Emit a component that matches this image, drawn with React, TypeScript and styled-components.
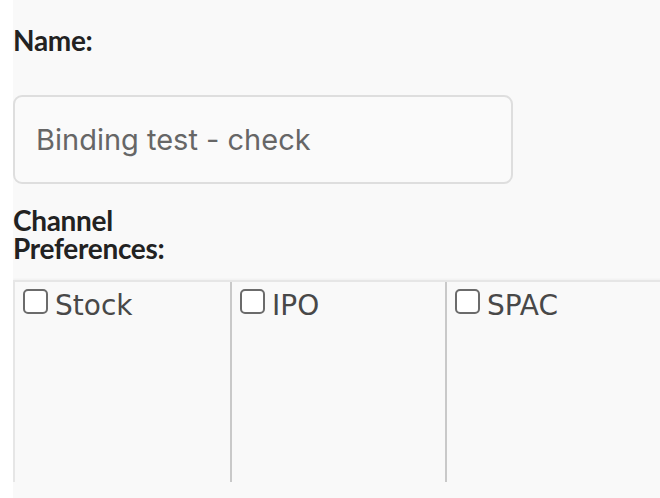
import React from "react"
import styled, { createGlobalStyle } from "styled-components"

const GlobalStyle = createGlobalStyle`
  html, body {
    margin: 0;
    padding: 0;
    background: #ffffff;
  }
  body {
    font-family: "Lato", "Liberation Sans", sans-serif;
    overflow: hidden;
  }
`

const channels = ["Stock", "IPO", "SPAC"]

const App: React.FC = () => {
  return (
    <>
      <GlobalStyle />
      <Page>
        <Label>Name:</Label>
        <NameInput defaultValue="Binding test - check" />
        <Label $tight>
          Channel
          <br />
          Preferences:
        </Label>
        <ChannelTable>
          {channels.map((c, i) => (
            <Column key={c} $first={i === 0}>
              <CheckRow>
                <Box type="checkbox" />
                <CheckText>{c}</CheckText>
              </CheckRow>
            </Column>
          ))}
        </ChannelTable>
      </Page>
    </>
  )
}

export default App

const Page = styled.div`
  margin-left: 13px;
  width: 647px;
  height: 498px;
  background: #f9f9f9;
  padding-top: 24px;
  box-sizing: border-box;
  display: flex;
  flex-direction: column;
  overflow: hidden;
`

const Label = styled.div<{ $tight?: boolean }>`
  font-family: "Lato", sans-serif;
  font-weight: 700;
  font-size: 28px;
  letter-spacing: -0.3px;
  line-height: ${(p) => (p.$tight ? "28px" : "32px")};
  color: #222;
  margin-bottom: ${(p) => (p.$tight ? "18px" : "39px")};
`

const NameInput = styled.input`
  flex: none;
  width: 500px;
  height: 89px;
  box-sizing: border-box;
  border: 2px solid #dedede;
  border-radius: 9px;
  background: #fafafa;
  padding: 0 21px;
  font-family: "Inter", sans-serif;
  font-size: 29px;
  color: #666;
  outline: none;
  margin-bottom: 22px;
`

const ChannelTable = styled.div`
  flex: none;
  display: grid;
  grid-template-columns: repeat(3, 215px);
  border-top: 2px solid #e6e6e6;
  border-left: 2px solid #e6e6e6;
  width: 700px;
  height: 200px;
  box-shadow: 0 -1px 2px rgba(0, 0, 0, 0.04);
`

const Column = styled.div<{ $first?: boolean }>`
  border-left: ${(p) => (p.$first ? "none" : "2px solid #c9c9c9")};
  padding: 7px 0 0 8px;
`

const CheckRow = styled.label`
  display: flex;
  align-items: flex-start;
  gap: 7px;
`

const Box = styled.input`
  flex: none;
  appearance: none;
  margin: 0;
  width: 25px;
  height: 25px;
  border: 2px solid #6b6b6b;
  border-radius: 5px;
  background: #fff;
  box-sizing: border-box;
`

const CheckText = styled.span`
  font-family: "DejaVu Sans", sans-serif;
  font-size: 28px;
  color: #484848;
  line-height: 34px;
`
